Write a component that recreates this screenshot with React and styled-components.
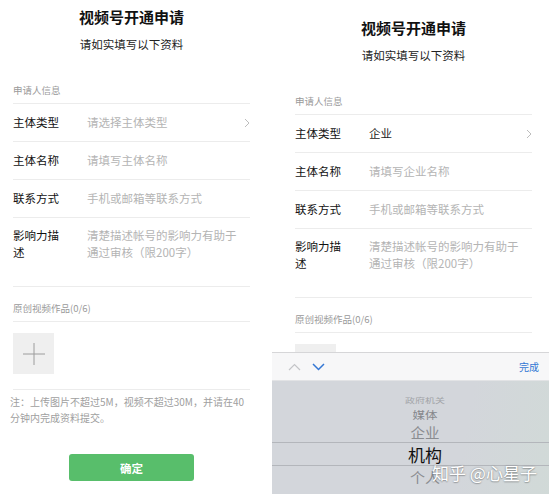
import React from "react";
import styled, { createGlobalStyle } from "styled-components";

const GlobalStyle = createGlobalStyle`
  html, body {
    margin: 0;
    padding: 0;
    background: #fff;
  }
  body {
    font-family: "Noto Sans CJK SC", "Noto Sans", "Liberation Sans", sans-serif;
  }
`;

const Page = styled.div`
  width: 549px;
  height: 494px;
  overflow: hidden;
  display: flex;
  gap: 5px;
  background: #fff;
`;

const Phone = styled.div`
  position: relative;
  flex: none;
  width: 277px;
  height: ${(p) => (p.$cropped ? "505px" : "494px")};
  margin-left: ${(p) => (p.$cropped ? "-10px" : "0")};
  margin-top: ${(p) => (p.$cropped ? "-11px" : "0")};
  overflow: hidden;
  background: #fff;
`;

const Header = styled.div`
  display: flex;
  flex-direction: column;
  align-items: center;
  padding-top: 18px;
  padding-left: 6px;
`;

const Title = styled.div`
  font-size: 15px;
  line-height: 20px;
  font-weight: 700;
  color: #111;
`;

const Subtitle = styled.div`
  margin-top: 9px;
  font-size: 11.5px;
  line-height: 16px;
  color: #222;
`;

const Form = styled.div`
  padding: 0 17px 0 23px;
`;

const SectionHead = styled.div`
  height: ${(p) => p.$h}px;
  box-sizing: border-box;
  display: flex;
  align-items: flex-end;
  padding-bottom: 6px;
  border-bottom: 1px solid #ececec;
  font-size: 9.5px;
  line-height: 14px;
  color: #9a9a9a;
`;

const Row = styled.div`
  display: flex;
  align-items: ${(p) => (p.$tall ? "flex-start" : "center")};
  height: ${(p) => (p.$tall ? "69px" : "38px")};
  box-sizing: border-box;
  padding-top: ${(p) => (p.$tall ? "9px" : "0")};
  border-bottom: 1px solid #ececec;
`;

const Label = styled.div`
  flex: none;
  width: 50px;
  margin-right: 24px;
  font-size: 11.5px;
  line-height: 17px;
  color: #111;
`;

const Value = styled.div`
  flex: 1;
  max-width: 155px;
  font-size: 11.5px;
  line-height: 17px;
  color: ${(p) => (p.$filled ? "#222" : "#b4b4b4")};
`;

const Chevron = styled.svg`
  margin-left: auto;
  flex: none;
`;

const Upload = styled.div`
  padding: 11px 0 15px;
  border-bottom: 1px solid #ececec;
`;

const AddBox = styled.div`
  width: 41px;
  height: 41px;
  background: #efefef;
  display: flex;
  align-items: center;
  justify-content: center;
`;

const Note = styled.div`
  margin-left: -3px;
  padding-top: 4px;
  font-size: 10px;
  line-height: 16px;
  color: #a0a0a0;
`;

const SubmitWrap = styled.div`
  display: flex;
  justify-content: center;
  padding-top: 28px;
`;

const Submit = styled.button`
  width: 125px;
  height: 27px;
  border: none;
  border-radius: 3px;
  background: #58be6b;
  color: #fff;
  font-family: inherit;
  font-size: 11.5px;
  font-weight: 700;
  padding: 0;
`;

const Picker = styled.div`
  position: absolute;
  left: 0;
  right: -20px;
  top: 352px;
  bottom: 0;
  display: flex;
  flex-direction: column;
`;

const Toolbar = styled.div`
  height: 29px;
  box-sizing: border-box;
  display: flex;
  align-items: center;
  gap: 11px;
  padding: 0 30px 0 16px;
  background: #f7f7f8;
  border-top: 1px solid #d6d6d8;
  border-bottom: 1px solid #e2e3e5;
`;

const Done = styled.div`
  margin-left: auto;
  font-size: 10px;
  color: #3477d4;
`;

const Wheel = styled.div`
  flex: 1;
  display: flex;
  flex-direction: column;
  padding: 12px 20px 0 9px;
  margin-right: -20px;
  background: linear-gradient(100deg, #d3d6db 0%, #d3d6db 60%, #d0dbd6 100%);
`;

const Item = styled.div`
  height: ${(p) => p.$h}px;
  box-sizing: border-box;
  display: flex;
  align-items: center;
  justify-content: center;
  font-size: ${(p) => p.$size}px;
  line-height: 1;
  color: ${(p) => p.$color};
  border-top: ${(p) => (p.$selected ? "1px solid #b3b6bb" : "none")};
  border-bottom: ${(p) => (p.$selected ? "1px solid #b3b6bb" : "none")};
  margin: ${(p) => (p.$selected ? "0 -20px 0 -9px" : "0")};
  padding-left: ${(p) => (p.$selected ? "9px" : "0")};
  padding-right: ${(p) => (p.$selected ? "20px" : "0")};

  span {
    display: inline-block;
    transform: scaleY(${(p) => p.$squash});
  }
`;

const Watermark = styled.div`
  position: absolute;
  left: 160px;
  top: 462px;
  font-size: 17px;
  line-height: 22px;
  color: #fff;
  text-shadow: 0 0 2px rgba(0, 0, 0, 0.35), 0 1px 1px rgba(0, 0, 0, 0.2);
  white-space: nowrap;
`;

const pickerItems = [
  { text: "政府机关", h: 14, size: 10, color: "#a2a4a8", squash: 0.65 },
  { text: "媒体", h: 16, size: 12.5, color: "#85878b", squash: 0.85 },
  { text: "企业", h: 19, size: 14.5, color: "#8a8c90", squash: 0.95 },
  { text: "机构", h: 24, size: 17, color: "#111", squash: 1, selected: true },
  { text: "个人", h: 20, size: 15, color: "#8a8c90", squash: 0.95 },
];

const RowArrow = () => (
  <Chevron width="6" height="10" viewBox="0 0 6 10">
    <polyline points="1,1 5,5 1,9" fill="none" stroke="#bdbdbd" strokeWidth="1" />
  </Chevron>
);

const ApplyForm = ({ typeValue, namePlaceholder }) => (
  <>
    <Header>
      <Title>视频号开通申请</Title>
      <Subtitle>请如实填写以下资料</Subtitle>
    </Header>
    <Form>
      <SectionHead $h={52}>申请人信息</SectionHead>
      <Row>
        <Label>主体类型</Label>
        <Value $filled={!!typeValue}>{typeValue || "请选择主体类型"}</Value>
        <RowArrow />
      </Row>
      <Row>
        <Label>主体名称</Label>
        <Value>{namePlaceholder}</Value>
      </Row>
      <Row>
        <Label>联系方式</Label>
        <Value>手机或邮箱等联系方式</Value>
      </Row>
      <Row $tall>
        <Label>影响力描述</Label>
        <Value>清楚描述帐号的影响力有助于通过审核（限200字）</Value>
      </Row>
      <SectionHead $h={35}>原创视频作品(0/6)</SectionHead>
      <Upload>
        <AddBox>
          <svg width="22" height="22" viewBox="0 0 22 22">
            <path d="M11 0V22M0 11H22" stroke="#9c9c9c" strokeWidth="1" />
          </svg>
        </AddBox>
      </Upload>
      <Note>
        注：上传图片不超过5M，视频不超过30M，并请在40
        <br />
        分钟内完成资料提交。
      </Note>
      <SubmitWrap>
        <Submit>确定</Submit>
      </SubmitWrap>
    </Form>
  </>
);

export default function App() {
  return (
    <>
      <GlobalStyle />
      <Page>
        <Phone $cropped>
          <ApplyForm namePlaceholder="请填写主体名称" />
        </Phone>
        <Phone>
          <ApplyForm typeValue="企业" namePlaceholder="请填写企业名称" />
          <Picker>
            <Toolbar>
              <svg width="13" height="8" viewBox="0 0 13 8">
                <polyline points="1,7 6.5,1.5 12,7" fill="none" stroke="#c4c5c8" strokeWidth="1.2" />
              </svg>
              <svg width="13" height="8" viewBox="0 0 13 8">
                <polyline points="1,1 6.5,6.5 12,1" fill="none" stroke="#3477d4" strokeWidth="1.5" />
              </svg>
              <Done>完成</Done>
            </Toolbar>
            <Wheel>
              {pickerItems.map((it) => (
                <Item
                  key={it.text}
                  $h={it.h}
                  $size={it.size}
                  $color={it.color}
                  $squash={it.squash}
                  $selected={it.selected}
                >
                  <span>{it.text}</span>
                </Item>
              ))}
            </Wheel>
          </Picker>
          <Watermark>知乎 @心星子</Watermark>
        </Phone>
      </Page>
    </>
  );
}
